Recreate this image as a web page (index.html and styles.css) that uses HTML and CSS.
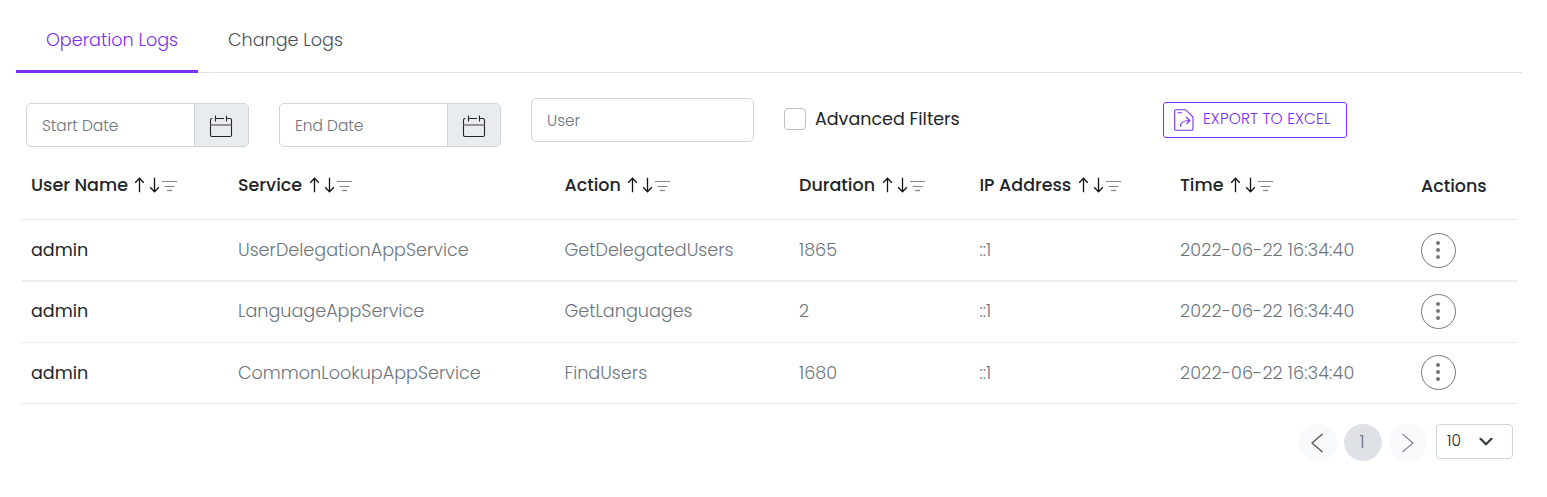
FILE: index.html
```html
<!DOCTYPE html>
<html lang="en">
<head>
<meta charset="utf-8">
<title>Audit Logs</title>
<link rel="stylesheet" href="styles.css">
</head>
<body>
<svg class="defs" width="0" height="0">
  <symbol id="sort" viewBox="0 0 44 16">
    <g fill="none" stroke="#111" stroke-width="1.3"><path d="M6.500 15.200V1.500M2.200 5.700L6.500 1.300L10.800 5.700"/><path d="M21.500 .8V14.300M17.200 10.300L21.500 14.700L25.800 10.300"/></g>
    <g fill="none" stroke="#888"><path d="M29 4.500H44M31.500 9.500H41.500" stroke-width="1.200"/><path d="M34 13.500H39" stroke-width="1.400"/></g>
  </symbol>
  <symbol id="calendar" viewBox="0 0 24 24">
    <g fill="none" stroke="#212529" stroke-width="1.100"><path d="M3.500 3.500H3Q1.500 3.500 1.500 5V20Q1.500 21.500 3 21.500H21Q22.500 21.500 22.500 20V5Q22.500 3.500 21 3.500H18.200M7 3.500H15M6.500 .5V6.500M17.500 .5V6.500"/><path d="M1.500 10H22.500" stroke="#777" stroke-width="1.600"/></g>
  </symbol>
</svg>
<main class="page">
  <nav class="tabs">
    <a class="tab active">Operation Logs</a>
    <a class="tab">Change Logs</a>
  </nav>
  <section class="filters">
    <div class="date"><span class="field">Start Date</span><span class="addon"><svg width="24" height="24"><use href="#calendar"/></svg></span></div>
    <div class="date second"><span class="field">End Date</span><span class="addon"><svg width="24" height="24"><use href="#calendar"/></svg></span></div>
    <div class="user">User</div>
    <div class="check"><span class="box"></span><span>Advanced Filters</span></div>
    <div class="export">
      <svg width="20" height="22" viewBox="0 0 20 22" fill="none" stroke="#7b2ff2" stroke-width="1.100"><path d="M2 .7H11.500L19 8V20Q19 21.300 17.700 21.300H2Q.7 21.300 .7 20V2Q.7 .7 2 .7ZM3.500 3.700H8M6.500 17.500C6.500 13.500 9 11.500 15.500 11.500M12 8L15.800 11.500L12.500 15"/></svg>
      <span class="export-label">EXPORT TO EXCEL</span>
    </div>
  </section>
  <section class="table">
    <div class="row head">
      <div><span>User Name</span><svg width="44" height="16"><use href="#sort"/></svg></div>
      <div><span>Service</span><svg width="44" height="16"><use href="#sort"/></svg></div>
      <div><span>Action</span><svg width="44" height="16"><use href="#sort"/></svg></div>
      <div><span>Duration</span><svg width="44" height="16"><use href="#sort"/></svg></div>
      <div><span>IP Address</span><svg width="44" height="16"><use href="#sort"/></svg></div>
      <div><span>Time</span><svg width="44" height="16"><use href="#sort"/></svg></div>
      <div class="h-actions"><span>Actions</span></div>
    </div>
    <div class="row thick"><div class="name">admin</div><div>UserDelegationAppService</div><div>GetDelegatedUsers</div><div>1865</div><div>::1</div><div class="time">2022-06-22 16:34:40</div><div><span class="more"><i></i><i></i><i></i></span></div></div>
    <div class="row middle"><div class="name">admin</div><div>LanguageAppService</div><div>GetLanguages</div><div>2</div><div>::1</div><div class="time">2022-06-22 16:34:40</div><div><span class="more"><i></i><i></i><i></i></span></div></div>
    <div class="row last"><div class="name">admin</div><div>CommonLookupAppService</div><div>FindUsers</div><div>1680</div><div>::1</div><div class="time">2022-06-22 16:34:40</div><div><span class="more"><i></i><i></i><i></i></span></div></div>
  </section>
  <footer class="pager">
    <span class="page-btn"><svg width="14" height="20" viewBox="0 0 14 20"><path d="M12.500 1L2 10L12.500 19" fill="none" stroke="#555" stroke-width="1.300"/></svg></span>
    <span class="page-btn current">1</span>
    <span class="page-btn next"><svg width="14" height="20" viewBox="0 0 14 20"><path d="M1.500 1L12 10L1.500 19" fill="none" stroke="#888f96" stroke-width="1.300"/></svg></span>
    <span class="size"><span>10</span><svg width="14" height="10" viewBox="0 0 14 10"><path d="M1.500 1.800L7 7.300L12.500 1.800" fill="none" stroke="#343a40" stroke-width="2.200" stroke-linecap="round" stroke-linejoin="round"/></svg></span>
  </footer>
</main>
</body>
</html>
```
FILE: styles.css
```css
* { box-sizing: border-box; }
body { margin: 0; background: #fff; color: #212529; font: 400 17.5px/24px Poppins, Inter, sans-serif; }
.defs { display: block; height: 0; }
.page { width: 1547px; height: 497px; padding: 8px 25px 0 16px; overflow: hidden; white-space: nowrap; }
.tabs { display: flex; height: 65px; border-bottom: 1px solid #dee2e6; }
.tab { height: 65px; padding: 20px 0 0 30px; color: #495057; font-size: 17.6px; font-weight: 300; }
.tab.active { width: 182px; color: #7b2ff2; border-bottom: 3px solid #7b2ff2; }
.filters { display: flex; height: 87px; padding: 25px 0 0 10px; }
.date { display: flex; width: 223px; height: 44px; margin-top: 5px; border: 1px solid #ced4da; border-radius: 5px; color: #6c757d; font-size: 15.4px; font-weight: 300; overflow: hidden; }
.date.second { width: 222px; margin-left: 30px; }
.field { flex: 1; padding: 10px 0 0 15px; }
.addon { width: 54px; padding: 11px 0 0 14px; background: #e9ecef; border-left: 1px solid #ced4da; }
.second .addon { width: 53px; }
.addon svg { display: block; }
.user { width: 223px; height: 44px; margin-left: 30px; padding: 10px 0 0 15px; border: 1px solid #ced4da; border-radius: 5px; color: #6c757d; font-size: 15.4px; font-weight: 300; }
.check { display: flex; gap: 9px; margin: 9px 0 0 30px; width: 379px; }
.box { width: 22px; height: 22px; margin-top: 1px; border: 1px solid #bfbfbf; border-radius: 4px; }
.export { display: flex; width: 184px; height: 36px; margin-top: 4px; padding: 6px 0 0 10px; gap: 9px; border: 1px solid #7b2ff2; border-radius: 3px; color: #7b2ff2; font-size: 15.4px; font-weight: 300; line-height: 22px; }
.export-label { margin-top: -1px; letter-spacing: 0.1px; }
.table { width: 1496px; margin-left: 5px; }
.row { display: grid; grid-template-columns: 207px 326.5px 234.5px 180.5px 200.5px 241px auto; height: 61px; padding: 18px 0 0 10px; border-bottom: 1px solid #e9ecef; color: #6c757d; font-size: 17.6px; font-weight: 300; }
.row.thick { height: 62px; border-bottom-width: 2px; }
.row.middle { padding-top: 17px; }
.row.last .more { margin-top: -6px; }
.row.head { height: 60px; padding-top: 13px; color: #212529; font-size: 17.5px; font-weight: 500; }
.head > div { display: flex; gap: 5.5px; }
.head svg { margin-top: 4px; }
.head .h-actions { padding-top: 1px; }
.name { color: #212529; font-size: 17.5px; font-weight: 400; }
.time { letter-spacing: 0.15px; }
.more { display: flex; flex-direction: column; gap: 3px; align-items: center; width: 35px; height: 35px; margin-top: -5px; padding: 7px 2px 0 0; border: 1px solid #777; border-radius: 50%; }
.more i { width: 4px; height: 4px; border-radius: 50%; background: #777; }
.pager { display: flex; justify-content: flex-end; padding: 20px 9px 0 0; }
.page-btn { display: flex; align-items: center; justify-content: center; width: 38px; height: 37px; margin-right: 7px; padding-right: 2px; border-radius: 50%; background: #f8f9fa; }
.page-btn.next { margin-right: 9px; padding-right: 0; }
.page-btn.current { background: #dee2e6; color: #6c757d; font-weight: 300; padding-bottom: 1px; }
.size { display: flex; width: 77px; height: 35px; padding: 4px 0 0 10px; gap: 18px; border: 1px solid #ced4da; border-radius: 4px; font-size: 15.4px; font-weight: 300; }
.size svg { margin-top: 8px; }
```
